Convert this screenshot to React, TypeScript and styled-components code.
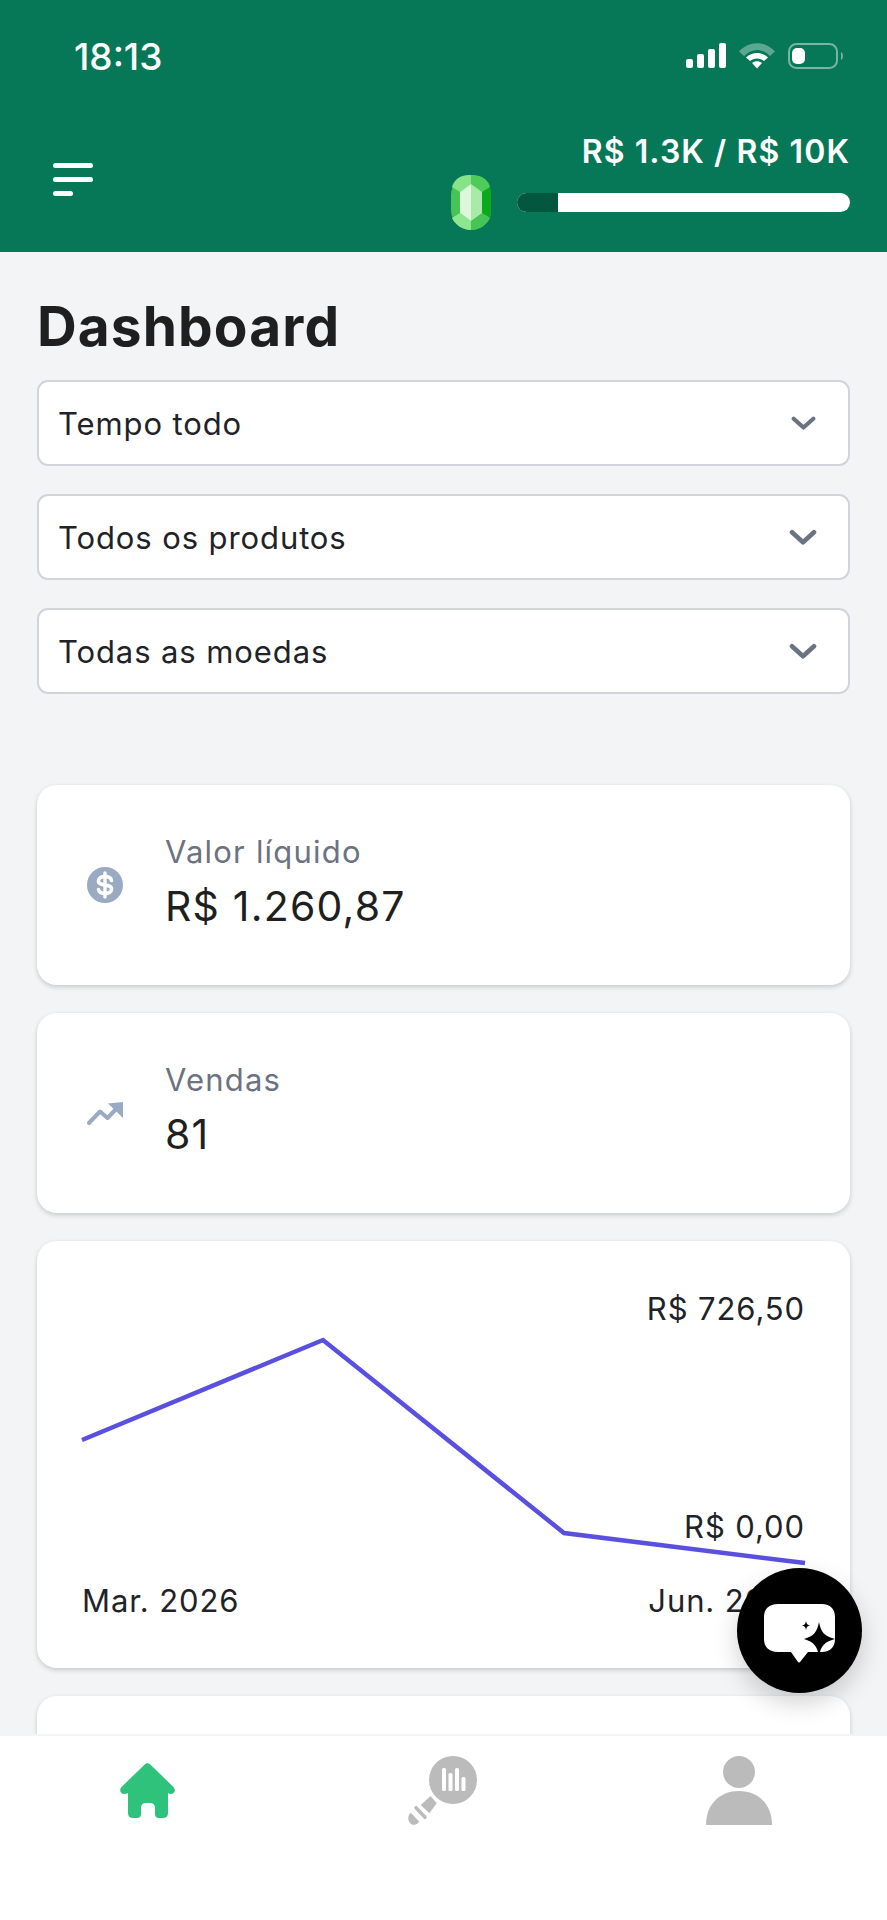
import styled, { createGlobalStyle } from 'styled-components';

const GlobalStyle = createGlobalStyle`
	* { box-sizing: border-box; }
	html, body { margin: 0; padding: 0; background: #f3f4f6; }
	body { font-family: Inter, "Noto Sans", sans-serif; }
`;

const filters = [
	{ label: 'Tempo todo', chevronWidth: 25 },
	{ label: 'Todos os produtos', chevronWidth: 29 },
	{ label: 'Todas as moedas', chevronWidth: 29 },
];

const chartPoints = '82,1440 323,1340 564,1533 805,1563'
	.split(' ')
	.map((point) => {
		const [x, y] = point.split(',').map(Number);
		return `${x - 37},${y - 1241}`;
	})
	.join(' ');

const MenuIcon = () => (
	<svg width="40" height="34" viewBox="0 0 40 34">
		<g fill="#fff">
			<rect x="0" y="0" width="40" height="5" rx="2.5" />
			<rect x="0" y="14" width="40" height="5" rx="2.5" />
			<rect x="0" y="28" width="20" height="5" rx="2.5" />
		</g>
	</svg>
);

const SignalIcon = () => (
	<svg width="40" height="26" viewBox="0 0 40 26">
		<g fill="#fff">
			<rect x="0" y="16" width="7" height="9" rx="2" />
			<rect x="11" y="11" width="7" height="14" rx="2" />
			<rect x="22" y="6" width="7" height="19" rx="2" />
			<rect x="33" y="0" width="7" height="25" rx="2" />
		</g>
	</svg>
);

const WifiIcon = () => (
	<svg width="36" height="26" viewBox="0 0 36 26">
		<path d="M0 8.5 C10 -2.5 26 -2.5 36 8.5 L31 13 C23 5 13 5 5 13 Z" fill="#fff" opacity="0.35" />
		<path d="M7 14.5 C13 8.5 23 8.5 29 14.5 L25 18 C21 14.5 15 14.5 11 18 Z" fill="#fff" />
		<path d="M13 20 C16 17.5 20 17.5 23 20 L18 25.5 Z" fill="#fff" />
	</svg>
);

const BatteryIcon = () => (
	<svg width="57" height="26" viewBox="0 0 57 26">
		<rect x="1" y="1" width="48" height="24" rx="7.5" fill="none" stroke="#fff" strokeOpacity="0.45" strokeWidth="2" />
		<rect x="4" y="5" width="13" height="16" rx="5" fill="#fff" />
		<path d="M53 9 C55.5 10 55.5 16 53 17 Z" fill="#fff" opacity="0.45" />
	</svg>
);

const GemIcon = () => (
	<svg width="40" height="55" viewBox="0 0 40 55">
		<rect x="0" y="0" width="40" height="55" rx="20" fill="#46c455" />
		<path d="M9 2 C15 -0.5 19 0 20 0 L20 9 L9 17 L1 12 C2 8 5 4 9 2 Z" fill="#86e38a" />
		<path d="M31 2 C36 5 38 8 39 12 L31 17 L20 9 L20 0 C24 0 27 0.5 31 2 Z" fill="#4fcb5c" />
		<path d="M31 17 L39 12 C40 16 40 18 40 20 L40 35 C40 38 40 40 39 43 L31 38 Z" fill="#0ca81e" />
		<path d="M1 43 L9 38 L20 46 L20 55 C12 55 4 50 1 43 Z" fill="#8be88f" />
		<path d="M39 43 L31 38 L20 46 L20 55 C28 55 36 50 39 43 Z" fill="#46c455" />
		<path d="M20 9 L31 17 L31 38 L20 46 Z" fill="#a9eaa9" />
		<path d="M20 9 L9 17 L9 38 L20 46 Z" fill="#dcf7da" />
	</svg>
);

const ChevronIcon = ({ width }: { width: number }) => (
	<svg width={width} height={(width * 16) / 28} viewBox="0 0 28 16">
		<path d="M3 3 L14 13 L25 3" fill="none" stroke="#6b7280" strokeWidth="4.6" strokeLinecap="round" strokeLinejoin="round" />
	</svg>
);

const DollarIcon = () => (
	<svg width="36" height="36" viewBox="0 0 36 36">
		<circle cx="18" cy="18" r="18" fill="#9aaac2" />
		<path d="M24.5 13.5 C24 10.5 21 9.5 18 9.5 C14.5 9.5 11.5 11 11.5 14 C11.5 20 24.5 16 24.5 22 C24.5 25 21.5 26.5 18 26.5 C15 26.5 12 25.5 11.5 22.5" fill="none" stroke="#fff" strokeWidth="3.6" strokeLinecap="round" />
		<path d="M18 6 V30" stroke="#fff" strokeWidth="3.4" strokeLinecap="round" />
	</svg>
);

const TrendIcon = () => (
	<svg width="36" height="24" viewBox="0 0 36 24">
		<path d="M2 22 L13 10.5 L20.5 17 L32 5" fill="none" stroke="#9aaac2" strokeWidth="4" strokeLinecap="round" strokeLinejoin="round" />
		<path d="M21 2.5 L36 1 V17 Z" fill="#9aaac2" />
	</svg>
);

const ChatIcon = () => (
	<svg width="72" height="60" viewBox="0 0 72 60">
		<path d="M14 0 H58 C66 0 71 5 71 13 V35 C71 43 66 48 58 48 H44 L36 58 Q35 59 34 58 L27 48 H14 C5 48 0 43 0 35 V13 C0 5 5 0 14 0 Z" fill="#fff" />
		<path d="M55 18 C57 28 60 32 71 35 C60 38 57 42 55 52 C53 42 50 38 40 35 C50 32 53 28 55 18 Z" fill="#000" />
		<path d="M42 17 C42.6 20 43.4 21 46 21.5 C43.4 22 42.6 23 42 26 C41.4 23 40.6 22 38 21.5 C40.6 21 41.4 20 42 17 Z" fill="#000" />
	</svg>
);

const HomeIcon = () => (
	<svg width="55" height="55" viewBox="0 0 55 55">
		<path d="M25 1.2 Q27.5 -0.8 30 1.2 L53.5 24 Q56.5 28 53 30.5 Q50 31.5 48 30 V50 Q48 55 43 55 H39 Q35 55 35 51 V45 Q35 40 30 40 H26 Q21 40 21 45 V51 Q21 55 17 55 H13 Q8 55 8 50 V30 Q5 31.5 2 30.5 Q-1.5 28 1.5 24 Z" fill="#2ec27a" />
	</svg>
);

const SearchChartIcon = () => (
	<svg width="70" height="70" viewBox="0 0 70 70">
		<circle cx="45" cy="24" r="24" fill="#bbb" />
		<g fill="#fff">
			<rect x="34" y="12" width="4" height="23" rx="1.5" />
			<rect x="40.5" y="17" width="4" height="18" rx="1.5" />
			<rect x="47" y="12" width="4" height="23" rx="1.5" />
			<rect x="53.5" y="21" width="4" height="14" rx="1.5" />
		</g>
		<path d="M22.7 40 L28.7 47.3 L21.3 57.3 L12.7 49 Z" fill="#bbb" />
		<path d="M8 51.7 L17 61.3" stroke="#bbb" strokeWidth="3.5" strokeLinecap="round" />
		<path d="M2.7 56.7 L11.3 65.7 Q8 70 4 68.5 Q-0.5 66 0.5 60.5 Q1 58 2.7 56.7 Z" fill="#bbb" />
	</svg>
);

const PersonIcon = () => (
	<svg width="66" height="70" viewBox="0 0 66 70">
		<ellipse cx="33" cy="16" rx="16" ry="16" fill="#bbb" />
		<path d="M0 69 C0 48 14 35 33 35 C52 35 66 48 66 69 Z" fill="#bbb" />
	</svg>
);

const App = () => (
	<Page>
		<GlobalStyle />
		<Header>
			<StatusBar>
				<Clock>18:13</Clock>
				<StatusIcons>
					<SignalIcon />
					<WifiIcon />
					<BatteryIcon />
				</StatusIcons>
			</StatusBar>
			<HeaderMain>
				<MenuButton>
					<MenuIcon />
				</MenuButton>
				<Goal>
					<GoalLabel>R$ 1.3K / R$ 10K</GoalLabel>
					<GoalRow>
						<GemIcon />
						<GoalTrack>
							<GoalFill />
						</GoalTrack>
					</GoalRow>
				</Goal>
			</HeaderMain>
		</Header>
		<Content>
			<Title>Dashboard</Title>
			<Filters>
				{filters.map(({ label, chevronWidth }) => (
					<Filter key={label}>
						{label}
						<ChevronSlot>
							<ChevronIcon width={chevronWidth} />
						</ChevronSlot>
					</Filter>
				))}
			</Filters>
			<Cards>
				<StatCard>
					<StatIcon>
						<DollarIcon />
					</StatIcon>
					<div>
						<StatLabel>Valor líquido</StatLabel>
						<StatValue>R$ 1.260,87</StatValue>
					</div>
				</StatCard>
				<StatCard>
					<StatIcon>
						<TrendIcon />
					</StatIcon>
					<div>
						<StatLabel>Vendas</StatLabel>
						<StatValue>81</StatValue>
					</div>
				</StatCard>
				<ChartCard>
					<ChartSvg viewBox="0 0 813 427">
						<polyline points={chartPoints} fill="none" stroke="#5a50e0" strokeWidth="4.5" />
					</ChartSvg>
					<ChartLabel $top={50} $right={45}>
						R$ 726,50
					</ChartLabel>
					<ChartLabel $top={268} $right={45}>
						R$ 0,00
					</ChartLabel>
					<ChartLabel $top={342} $left={45}>
						Mar. 2026
					</ChartLabel>
					<ChartLabel $top={342} $right={45}>
						Jun. 2026
					</ChartLabel>
				</ChartCard>
				<StatCard />
			</Cards>
		</Content>
		<Fab>
			<ChatIcon />
		</Fab>
		<BottomNav>
			<NavItem $top={27}>
				<HomeIcon />
			</NavItem>
			<NavItem $top={20}>
				<SearchChartIcon />
			</NavItem>
			<NavItem $top={20}>
				<PersonIcon />
			</NavItem>
		</BottomNav>
	</Page>
);

export default App;

const Page = styled.div`
	position: relative;
	display: flex;
	flex-direction: column;
	width: 887px;
	height: 1920px;
	overflow: hidden;
	background: #f3f4f6;
`;

const Header = styled.header`
	height: 252px;
	flex: none;
	background: #067857;
	color: #fff;
`;

const StatusBar = styled.div`
	display: flex;
	justify-content: space-between;
	align-items: flex-start;
	height: 112px;
	padding: 37px 42px 0 74px;
`;

const Clock = styled.div`
	font-size: 37px;
	line-height: 40px;
	font-weight: 500;
`;

const StatusIcons = styled.div`
	display: flex;
	align-items: center;
	gap: 13px;
	margin-top: 6px;
`;

const HeaderMain = styled.div`
	display: flex;
	justify-content: space-between;
	padding: 0 37px 0 53px;
`;

const MenuButton = styled.div`
	margin-top: 51px;
`;

const Goal = styled.div`
	display: flex;
	flex-direction: column;
	align-items: flex-end;
	padding-top: 20px;
`;

const GoalLabel = styled.div`
	height: 40px;
	font-size: 32px;
	line-height: 40px;
	font-weight: 600;
	letter-spacing: 1.1px;
`;

const GoalRow = styled.div`
	display: flex;
	align-items: center;
	gap: 26px;
	margin-top: 3px;
`;

const GoalTrack = styled.div`
	width: 333px;
	height: 19px;
	border-radius: 10px;
	overflow: hidden;
	background: #fff;
`;

const GoalFill = styled.div`
	width: 41px;
	height: 100%;
	background: #04573f;
`;

const Content = styled.main`
	flex: 1;
	min-height: 0;
	overflow: hidden;
	padding: 0 37px;
`;

const Title = styled.h1`
	margin: 0;
	padding-top: 36px;
	height: 128px;
	font-size: 55px;
	line-height: 76px;
	font-weight: 700;
	letter-spacing: 1.1px;
	color: #1f1f1f;
`;

const Filters = styled.div`
	display: flex;
	flex-direction: column;
	gap: 28px;
	margin-bottom: 91px;
`;

const Filter = styled.div`
	display: flex;
	justify-content: space-between;
	align-items: center;
	height: 86px;
	padding: 0 31px 0 19px;
	background: #fff;
	border: 2px solid #d1d5db;
	border-radius: 11px;
	font-size: 31px;
	letter-spacing: 0.9px;
	color: #1f2328;
`;

const ChevronSlot = styled.div`
	display: flex;
	justify-content: center;
	align-items: center;
	width: 28px;
`;

const Cards = styled.div`
	display: flex;
	flex-direction: column;
	gap: 28px;
`;

const StatCard = styled.section`
	display: flex;
	align-items: center;
	flex: none;
	height: 200px;
	padding: 0 50px;
	background: #fff;
	border-radius: 20px;
	box-shadow: 0 2px 5px rgba(0, 0, 0, 0.18);
`;

const StatIcon = styled.div`
	display: flex;
	justify-content: center;
	width: 36px;
	margin-right: 42px;
`;

const StatLabel = styled.div`
	margin-bottom: 5px;
	font-size: 31px;
	line-height: 42px;
	letter-spacing: 1.2px;
	color: #6b7280;
`;

const StatValue = styled.div`
	margin-bottom: 5px;
	font-size: 41px;
	line-height: 56px;
	letter-spacing: 1.2px;
	color: #1f1f1f;
`;

const ChartCard = styled.section`
	position: relative;
	flex: none;
	height: 427px;
	background: #fff;
	border-radius: 20px;
	box-shadow: 0 2px 5px rgba(0, 0, 0, 0.18);
`;

const ChartSvg = styled.svg`
	display: block;
	width: 813px;
	height: 427px;
`;

const ChartLabel = styled.div<{ $top: number; $left?: number; $right?: number }>`
	position: absolute;
	top: ${({ $top }) => $top}px;
	${({ $left }) => ($left !== undefined ? `left: ${$left}px;` : '')}
	${({ $right }) => ($right !== undefined ? `right: ${$right}px;` : '')}
	font-size: 31px;
	line-height: 36px;
	letter-spacing: 0.9px;
	color: #1f2328;
`;

const Fab = styled.div`
	position: absolute;
	top: 1568px;
	left: 737px;
	display: flex;
	justify-content: center;
	align-items: center;
	width: 125px;
	height: 125px;
	padding-top: 7px;
	border-radius: 50%;
	background: #000;
	box-shadow: 0 10px 24px rgba(0, 0, 0, 0.18);
`;

const BottomNav = styled.nav`
	display: grid;
	grid-template-columns: repeat(3, 1fr);
	flex: none;
	height: 186px;
	background: #fff;
	border-top: 2px solid #f3f4f6;
`;

const NavItem = styled.div<{ $top: number }>`
	display: flex;
	justify-content: center;
	align-items: flex-start;
	padding-top: ${({ $top }) => $top}px;
`;
